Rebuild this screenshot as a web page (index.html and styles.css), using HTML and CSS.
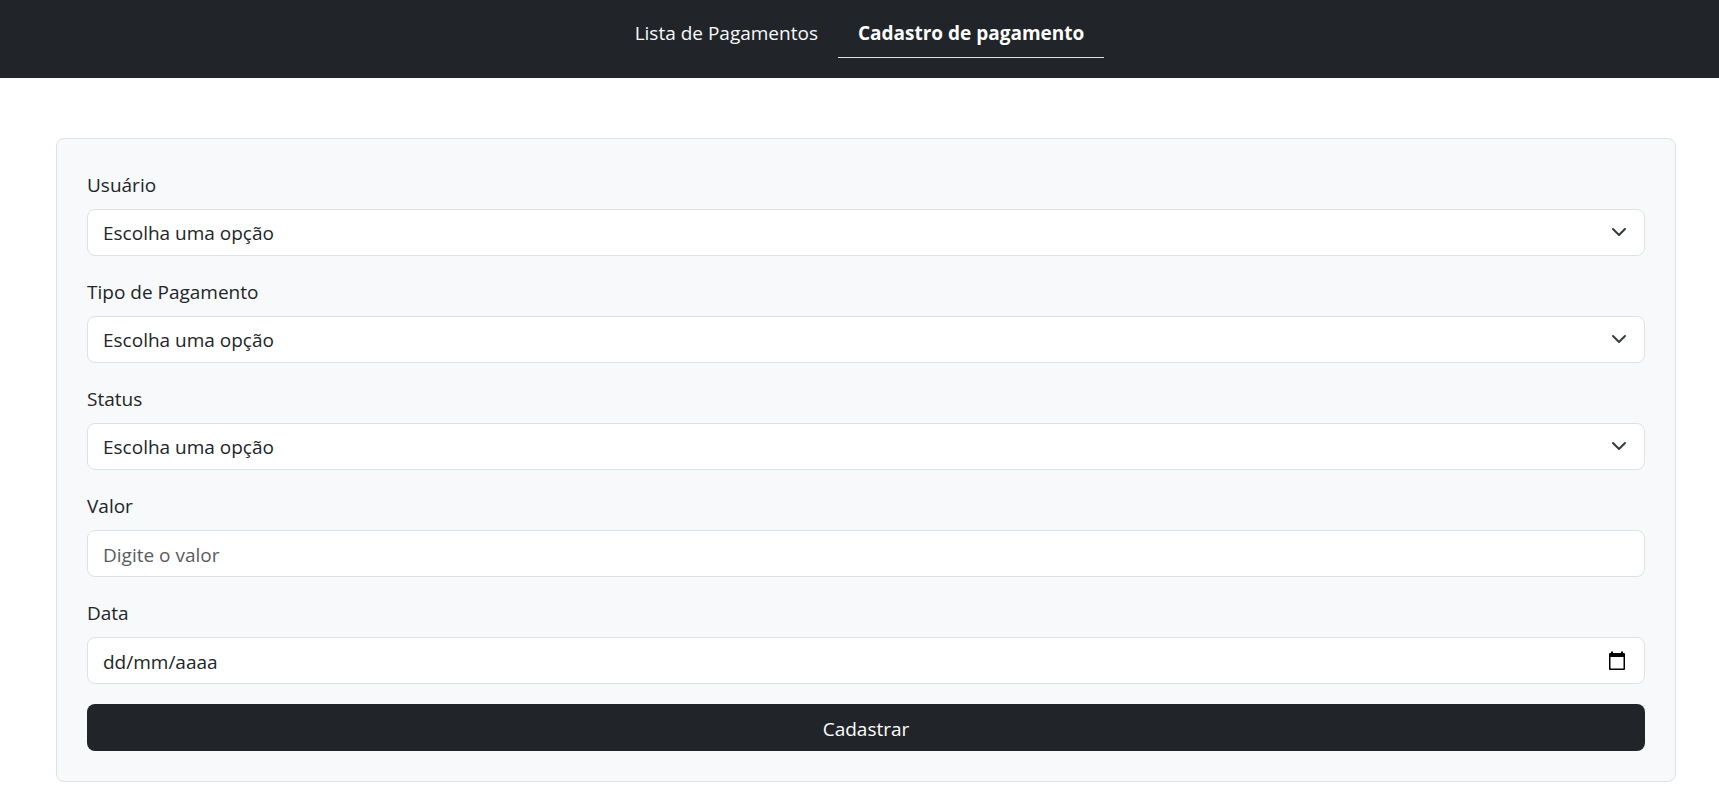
FILE: index.html
```html
<!DOCTYPE html>
<html lang="pt-BR">
<head>
  <meta charset="utf-8">
  <meta name="viewport" content="width=device-width, initial-scale=1">
  <title>Cadastro de pagamento</title>
  <link rel="stylesheet" href="styles.css">
</head>
<body>
  <header class="topbar">
    <nav class="nav">
      <a class="nav-link" href="#lista">Lista de Pagamentos</a>
      <a class="nav-link active" href="#cadastro" aria-current="page">Cadastro de pagamento</a>
    </nav>
  </header>
  <main class="content">
    <form class="card">
      <div class="field">
        <label for="usuario">Usuário</label>
        <div class="control-wrap">
          <select class="control" id="usuario"><option>Escolha uma opção</option></select>
          <svg class="chevron" viewBox="0 0 16 16" aria-hidden="true"><path d="m2 5 6 6 6-6"/></svg>
        </div>
      </div>
      <div class="field">
        <label for="tipo">Tipo de Pagamento</label>
        <div class="control-wrap">
          <select class="control" id="tipo"><option>Escolha uma opção</option></select>
          <svg class="chevron" viewBox="0 0 16 16" aria-hidden="true"><path d="m2 5 6 6 6-6"/></svg>
        </div>
      </div>
      <div class="field">
        <label for="status">Status</label>
        <div class="control-wrap">
          <select class="control" id="status"><option>Escolha uma opção</option></select>
          <svg class="chevron" viewBox="0 0 16 16" aria-hidden="true"><path d="m2 5 6 6 6-6"/></svg>
        </div>
      </div>
      <div class="field">
        <label for="valor">Valor</label>
        <input class="control" id="valor" type="text" inputmode="decimal" placeholder="Digite o valor">
      </div>
      <div class="field">
        <label for="data">Data</label>
        <div class="control-wrap">
          <input class="control date" id="data" type="text" placeholder="dd/mm/aaaa">
          <button class="picker" type="button" aria-label="Abrir calendário">
            <svg viewBox="0 0 20 20" aria-hidden="true"><path fill-rule="evenodd" d="M4 .5h2V2h8V.5h2V2h1a1 1 0 0 1 1 1v15a1 1 0 0 1-1 1H3a1 1 0 0 1-1-1V3a1 1 0 0 1 1-1h1zM3.500 6v11.500h13V6z"/></svg>
          </button>
        </div>
      </div>
      <button class="submit" type="submit">Cadastrar</button>
    </form>
  </main>
</body>
</html>
```
FILE: styles.css
```css
*,
*::before,
*::after {
  box-sizing: border-box;
}

body {
  margin: 0;
  background: #fff;
  color: #212529;
  font-family: "Segoe UI", "Open Sans", "Noto Sans", sans-serif;
  font-size: 19px;
  line-height: 30px;
}

.topbar {
  padding: 8px 20px 20px;
  background: #212529;
}

.nav {
  display: flex;
  justify-content: center;
}

.nav-link {
  padding: 10px 20px 9px;
  border-bottom: 1px solid transparent;
  color: #f8f9fa;
  text-decoration: none;
}

.nav-link.active {
  border-bottom-color: #dee2e6;
  color: #fff;
  font-weight: 700;
}

.content {
  padding: 60px 43px 18px 56px;
}

.card {
  display: flex;
  flex-direction: column;
  gap: 20px;
  padding: 30px;
  border: 1px solid #dee2e6;
  border-radius: 8px;
  background: #f8f9fa;
}

.field {
  display: flex;
  flex-direction: column;
  gap: 8px;
  line-height: 32px;
}

.control-wrap {
  position: relative;
}

.control {
  display: block;
  width: 100%;
  height: 47px;
  margin: 0;
  padding: 9px 15px 7px;
  border: 1px solid #dee2e6;
  border-radius: 8px;
  background: #fff;
  color: inherit;
  font: inherit;
  line-height: 29px;
  appearance: none;
}

.control::placeholder {
  color: #595c5f;
  opacity: 1;
}

.date::placeholder {
  color: #212529;
}

.chevron {
  position: absolute;
  top: 15px;
  right: 18px;
  width: 16px;
  height: 16px;
  fill: none;
  stroke: #343a40;
  stroke-width: 2;
  stroke-linecap: round;
  stroke-linejoin: round;
  pointer-events: none;
}

.picker {
  position: absolute;
  top: 14px;
  right: 18px;
  display: flex;
  padding: 0;
  border: 0;
  background: none;
}

.picker svg {
  width: 20px;
  height: 20px;
}

.submit {
  padding: 10px 15px 7px;
  border: 0;
  border-radius: 8px;
  background: #212529;
  color: #fff;
  font: inherit;
}
```
